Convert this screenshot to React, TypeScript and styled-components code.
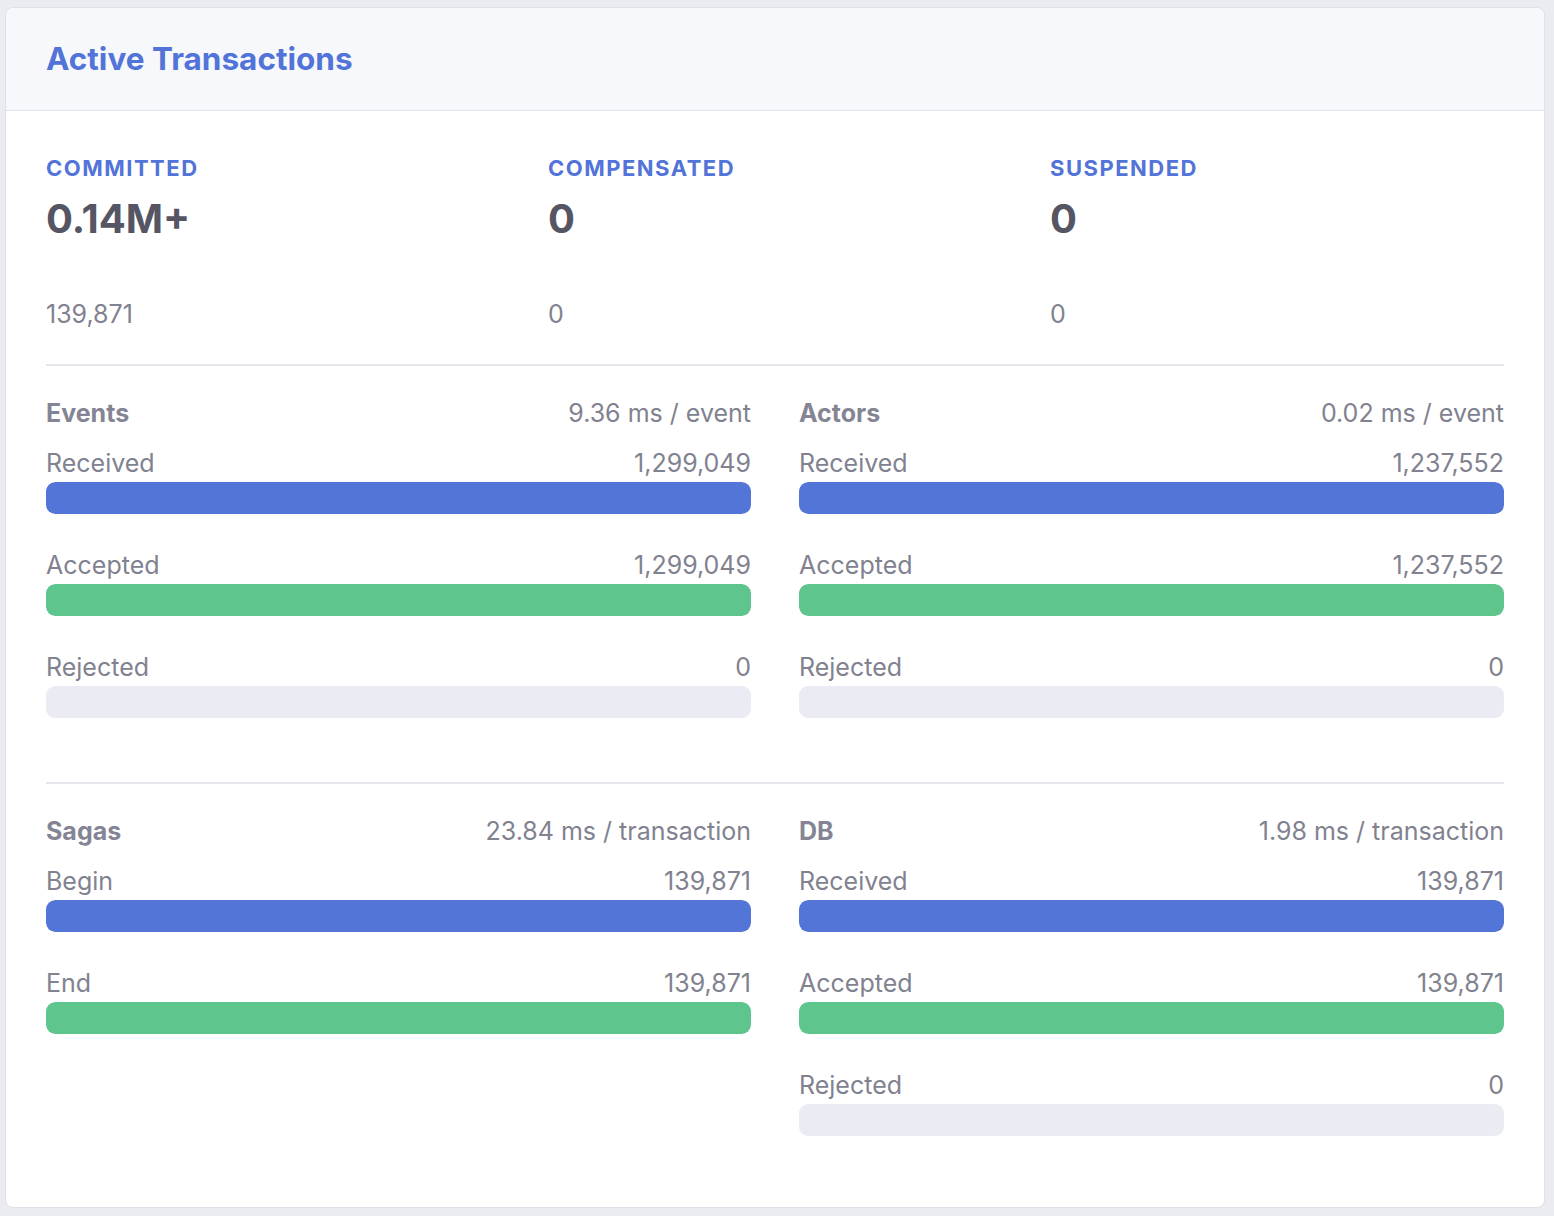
import React from "react";
import styled, { createGlobalStyle } from "styled-components";

const GlobalStyle = createGlobalStyle`
  html, body {
    margin: 0;
    padding: 0;
    background: #ebecf1;
  }
  body {
    font-family: Inter, "Noto Sans", "Liberation Sans", sans-serif;
    -webkit-font-smoothing: antialiased;
  }
  * { box-sizing: border-box; }
`;

const Page = styled.div`
  padding: 7px 9px 8px 5px;
`;

const Card = styled.div`
  background: #ffffff;
  border: 1px solid #dfe0e8;
  border-radius: 8px;
  overflow: hidden;
`;

const Header = styled.div`
  height: 103px;
  display: flex;
  align-items: center;
  padding: 0 40px;
  background: #f7f8fc;
  border-bottom: 1px solid #e0e1ea;
`;

const Title = styled.h2`
  margin: 0;
  font-size: 31.5px;
  line-height: 36px;
  font-weight: 700;
  color: #5273d8;
`;

const Body = styled.div`
  padding: 0 40px 7px;
`;

const StatsRow = styled.div`
  display: grid;
  grid-template-columns: repeat(3, 1fr);
  column-gap: 48px;
  padding: 44px 0 35px;
  border-bottom: 2px solid #e6e7ec;
`;

const Stat = styled.div`
  display: flex;
  flex-direction: column;
`;

const StatLabel = styled.div`
  font-size: 22px;
  line-height: 26px;
  font-weight: 700;
  letter-spacing: 1.5px;
  text-transform: uppercase;
  color: #5273d8;
`;

const StatValue = styled.div`
  margin-top: 14px;
  font-size: 40px;
  line-height: 48px;
  font-weight: 700;
  color: #555563;
`;

const StatSub = styled.div`
  margin-top: 56px;
  font-size: 25px;
  line-height: 30px;
  color: #81828f;
`;

const Section = styled.div<{ $divider?: boolean }>`
  display: grid;
  grid-template-columns: 1fr 1fr;
  column-gap: 48px;
  align-items: start;
  padding: 32px 0 64px;
  border-bottom: ${(p) => (p.$divider ? "2px solid #e6e7ec" : "none")};
`;

const Panel = styled.div`
  display: flex;
  flex-direction: column;
  gap: 36px;
`;

const PanelHead = styled.div`
  display: flex;
  justify-content: space-between;
  align-items: center;
  height: 30px;
  margin-bottom: -16px;
`;

const PanelTitle = styled.div`
  font-size: 25px;
  font-weight: 700;
  color: #848594;
`;

const Rate = styled.div`
  font-size: 25px;
  color: #81828f;
`;

const Metric = styled.div`
  display: flex;
  flex-direction: column;
`;

const MetricRow = styled.div`
  display: flex;
  justify-content: space-between;
  align-items: center;
  height: 30px;
  margin-bottom: 4px;
  font-size: 25px;
  color: #81828f;
`;

const Track = styled.div`
  height: 32px;
  border-radius: 9px;
  background: #ebebf3;
  overflow: hidden;
`;

const Fill = styled.div<{ $tone: "blue" | "green" }>`
  height: 100%;
  border-radius: 9px;
  background: ${(p) => (p.$tone === "blue" ? "#5375d7" : "#5ec68d")};
`;

type MetricData = { label: string; value: number; tone: "blue" | "green" };
type PanelData = { title: string; rate: string; metrics: MetricData[] };

const fmt = (n: number) => n.toLocaleString("en-US");

const stats = [
  { label: "Committed", value: "0.14M+", sub: "139,871" },
  { label: "Compensated", value: "0", sub: "0" },
  { label: "Suspended", value: "0", sub: "0" },
];

const sections: PanelData[][] = [
  [
    {
      title: "Events",
      rate: "9.36 ms / event",
      metrics: [
        { label: "Received", value: 1299049, tone: "blue" },
        { label: "Accepted", value: 1299049, tone: "green" },
        { label: "Rejected", value: 0, tone: "green" },
      ],
    },
    {
      title: "Actors",
      rate: "0.02 ms / event",
      metrics: [
        { label: "Received", value: 1237552, tone: "blue" },
        { label: "Accepted", value: 1237552, tone: "green" },
        { label: "Rejected", value: 0, tone: "green" },
      ],
    },
  ],
  [
    {
      title: "Sagas",
      rate: "23.84 ms / transaction",
      metrics: [
        { label: "Begin", value: 139871, tone: "blue" },
        { label: "End", value: 139871, tone: "green" },
      ],
    },
    {
      title: "DB",
      rate: "1.98 ms / transaction",
      metrics: [
        { label: "Received", value: 139871, tone: "blue" },
        { label: "Accepted", value: 139871, tone: "green" },
        { label: "Rejected", value: 0, tone: "green" },
      ],
    },
  ],
];

function PanelView({ data }: { data: PanelData }) {
  const max = Math.max(...data.metrics.map((m) => m.value), 1);
  return (
    <Panel>
      <PanelHead>
        <PanelTitle>{data.title}</PanelTitle>
        <Rate>{data.rate}</Rate>
      </PanelHead>
      {data.metrics.map((m) => (
        <Metric key={m.label}>
          <MetricRow>
            <span>{m.label}</span>
            <span>{fmt(m.value)}</span>
          </MetricRow>
          <Track>
            {m.value > 0 && (
              <Fill $tone={m.tone} style={{ width: `${(m.value / max) * 100}%` }} />
            )}
          </Track>
        </Metric>
      ))}
    </Panel>
  );
}

export default function App() {
  return (
    <>
      <GlobalStyle />
      <Page>
        <Card>
          <Header>
            <Title>Active Transactions</Title>
          </Header>
          <Body>
            <StatsRow>
              {stats.map((s) => (
                <Stat key={s.label}>
                  <StatLabel>{s.label}</StatLabel>
                  <StatValue>{s.value}</StatValue>
                  <StatSub>{s.sub}</StatSub>
                </Stat>
              ))}
            </StatsRow>
            {sections.map((panels, i) => (
              <Section key={i} $divider={i < sections.length - 1}>
                {panels.map((p) => (
                  <PanelView key={p.title} data={p} />
                ))}
              </Section>
            ))}
          </Body>
        </Card>
      </Page>
    </>
  );
}
